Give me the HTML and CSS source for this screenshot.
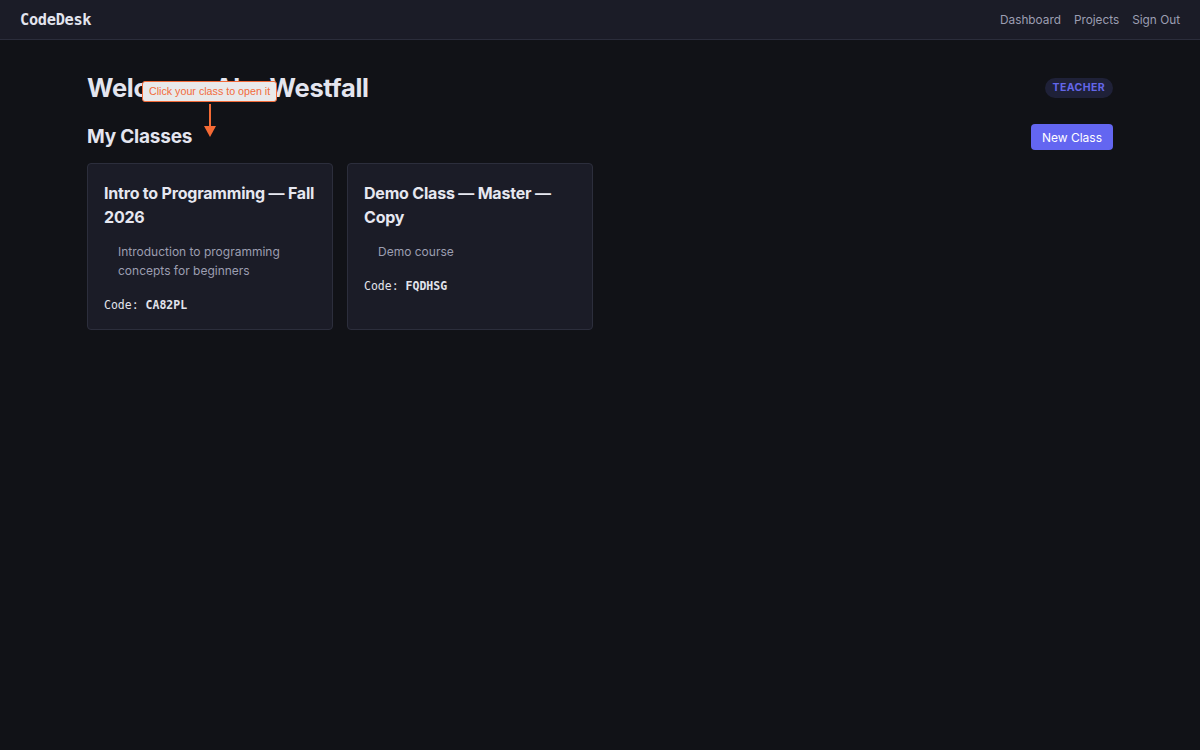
FILE: index.html
```html
<!DOCTYPE html>
<html lang="en">
<head>
<meta charset="utf-8">
<title>CodeDesk</title>
<link rel="stylesheet" href="styles.css">
</head>
<body>
<header class="navbar">
  <div class="logo">CodeDesk</div>
  <nav class="nav-links">
    <a href="#">Dashboard</a>
    <a href="#">Projects</a>
    <a href="#">Sign Out</a>
  </nav>
</header>
<main class="container">
  <div class="page-head">
    <h1 class="welcome">Welcome, Abe Westfall</h1>
    <span class="badge">TEACHER</span>
  </div>
  <div class="section-head">
    <h2 class="section-title">My Classes</h2>
    <button class="btn-primary">New Class</button>
  </div>
  <div class="cards">
    <div class="card">
      <h3 class="card-title">Intro to Programming — Fall 2026</h3>
      <p class="card-desc">Introduction to programming concepts for beginners</p>
      <div class="card-code">Code: <strong>CA82PL</strong></div>
    </div>
    <div class="card">
      <h3 class="card-title">Demo Class — Master — Copy</h3>
      <p class="card-desc">Demo course</p>
      <div class="card-code">Code: <strong>FQDHSG</strong></div>
    </div>
  </div>
  <div class="hint">
    <div class="hint-box">Click your class to open it</div>
    <svg class="hint-arrow" width="14" height="34" viewBox="0 0 14 34">
      <line x1="7" y1="0" x2="7" y2="24" stroke="#f46a35" stroke-width="2"/>
      <polygon points="1,22 13,22 7,33" fill="#f46a35"/>
    </svg>
  </div>
</main>
</body>
</html>
```

FILE: styles.css
```css
* { box-sizing: border-box; }
html, body { margin: 0; padding: 0; }
body {
  background: #111217;
  color: #e6e7ee;
  font-family: Inter, "Noto Sans", "Liberation Sans", sans-serif;
  min-height: 750px;
}
.navbar {
  height: 40px;
  background: #1b1c27;
  border-bottom: 1px solid #2b2d3b;
  display: flex;
  align-items: center;
  justify-content: space-between;
  padding: 0 20px;
}
.logo {
  font-family: "DejaVu Sans Mono", "Liberation Mono", monospace;
  font-weight: 700;
  font-size: 15.3px;
  color: #e3e4ee;
  letter-spacing: -0.3px;
}
.nav-links { display: flex; gap: 13px; }
.nav-links a {
  color: #9c9eb2;
  text-decoration: none;
  font-size: 11.8px;
}
.container {
  width: 1026px;
  margin: 0 auto;
  padding-top: 33px;
  position: relative;
}
.page-head {
  display: flex;
  align-items: center;
  justify-content: space-between;
}
.welcome {
  margin: 0;
  font-size: 25.5px;
  font-weight: 700;
  line-height: 30px;
  color: #e4e5ef;
  letter-spacing: -0.3px;
}
.badge {
  background: #1f2138;
  color: #6366e8;
  font-size: 10.5px;
  font-weight: 700;
  letter-spacing: 0.4px;
  padding: 0 8px;
  height: 20px;
  line-height: 20px;
  border-radius: 10px;
}
.section-head {
  display: flex;
  align-items: center;
  justify-content: space-between;
  margin-top: 21px;
}
.section-title {
  margin: 0;
  font-size: 19px;
  font-weight: 700;
  line-height: 26px;
  color: #e4e5ef;
  letter-spacing: -0.2px;
}
.btn-primary {
  background: #6366f1;
  color: #ffffff;
  border: none;
  border-radius: 4px;
  font-family: inherit;
  font-size: 12px;
  height: 26px;
  padding: 0 11px;
}
.cards {
  display: flex;
  gap: 14px;
  margin-top: 13px;
}
.card {
  width: 246px;
  min-height: 167px;
  background: #1b1c27;
  border: 1px solid #2c2e3c;
  border-radius: 4px;
  padding: 17px 16px;
}
.card-title {
  margin: 0;
  font-size: 16px;
  font-weight: 700;
  line-height: 24px;
  color: #e6e7f0;
  letter-spacing: -0.2px;
}
.card-desc {
  margin: 13px 0 0;
  padding-left: 14px;
  font-size: 12px;
  line-height: 19px;
  color: #9c9eb1;
}
.card-code {
  margin-top: 18px;
  font-family: "DejaVu Sans Mono", "Liberation Mono", monospace;
  font-size: 11.5px;
  color: #e2e3ec;
}
.card-code strong { font-weight: 700; }
.hint {
  position: absolute;
  left: 55px;
  top: 41px;
  display: flex;
  flex-direction: column;
  align-items: center;
}
.hint-box {
  background: #e9e9ea;
  border: 1px solid #f26b3a;
  border-radius: 3px;
  color: #f26b3a;
  font-family: "Liberation Sans", Arial, sans-serif;
  font-size: 10.7px;
  height: 21px;
  line-height: 19px;
  padding: 0 6px;
  white-space: nowrap;
}
.hint-arrow { display: block; margin-top: 2px; }
```
